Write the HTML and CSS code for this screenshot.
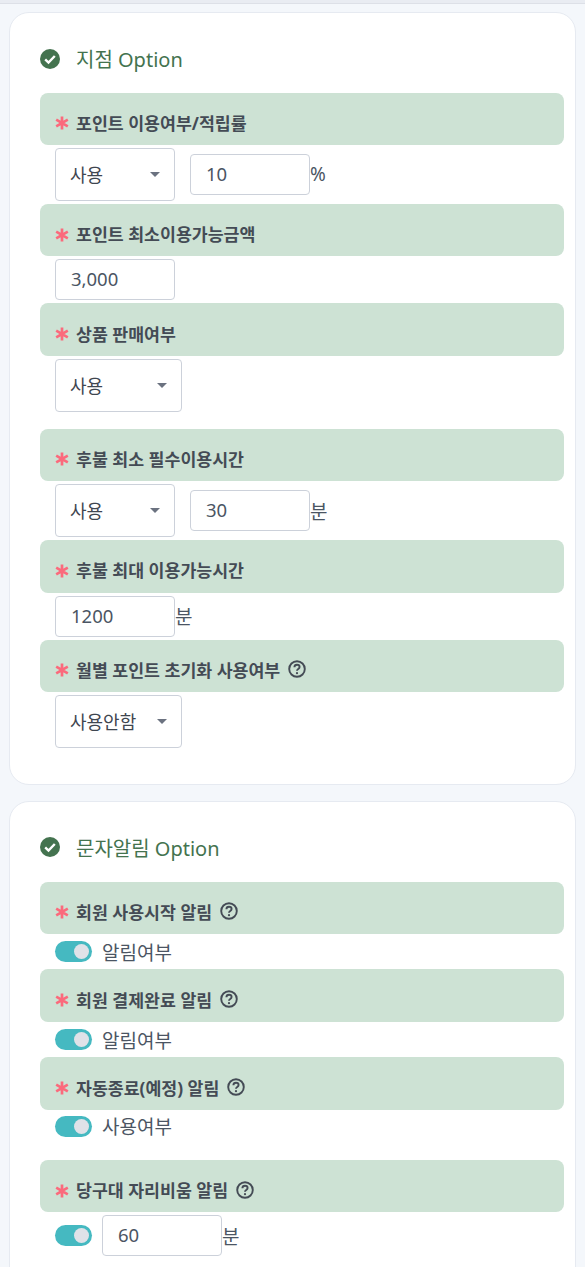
FILE: index.html
```html
<!DOCTYPE html>
<html lang="ko">
<head>
<meta charset="UTF-8" />
<meta name="viewport" content="width=device-width, initial-scale=1" />
<title>Option</title>
<link rel="stylesheet" href="styles.css">
</head>
<body>

<svg class="icon-defs" width="0" height="0">
  <symbol id="check-circle" viewBox="0 0 20 20">
    <circle cx="10" cy="10" r="10" fill="#44734f" />
    <path d="M5.2 10.4l3.3 3.2 6.3-6.6" fill="none" stroke="#fff" stroke-width="2.4" />
  </symbol>
  <symbol id="help-circle" viewBox="0 0 18 18">
    <circle cx="9" cy="9" r="7.8" fill="none" stroke="#444b55" stroke-width="1.9" />
    <path d="M6.4 7.2c0-1.6 1.2-2.5 2.6-2.5s2.6.9 2.6 2.3c0 2-2.6 1.9-2.6 3.7" fill="none" stroke="#444b55" stroke-width="1.9" />
    <circle cx="9" cy="13.2" r="1.1" fill="#444b55" />
  </symbol>
  <symbol id="asterisk" viewBox="0 0 14 14">
    <path d="M7 0.5v13M1.2 3.6l11.6 6.8M12.8 3.6l-11.6 6.8" fill="none" stroke="#fb6a7c" stroke-width="2.7" />
  </symbol>
</svg>

<div class="topbar"></div>

<!-- 지점 Option -->
<section class="card">
  <h2 class="card-title"><svg class="title-icon"><use href="#check-circle" /></svg>지점 Option</h2>

  <div class="field-head"><svg class="star"><use href="#asterisk" /></svg>포인트 이용여부/적립률</div>
  <div class="field-row">
    <div class="select-box"><select><option>사용</option></select></div>
    <input class="text-input input-after" type="text" value="10" /><span class="unit">%</span>
  </div>

  <div class="field-head"><svg class="star"><use href="#asterisk" /></svg>포인트 최소이용가능금액</div>
  <div class="field-row">
    <input class="text-input" type="text" value="3,000" />
  </div>

  <div class="field-head"><svg class="star"><use href="#asterisk" /></svg>상품 판매여부</div>
  <div class="field-row row-spaced">
    <div class="select-box select-wide"><select><option>사용</option></select></div>
  </div>

  <div class="field-head"><svg class="star"><use href="#asterisk" /></svg>후불 최소 필수이용시간</div>
  <div class="field-row">
    <div class="select-box"><select><option>사용</option></select></div>
    <input class="text-input input-after" type="text" value="30" /><span class="unit">분</span>
  </div>

  <div class="field-head"><svg class="star"><use href="#asterisk" /></svg>후불 최대 이용가능시간</div>
  <div class="field-row">
    <input class="text-input" type="text" value="1200" /><span class="unit">분</span>
  </div>

  <div class="field-head"><svg class="star"><use href="#asterisk" /></svg>월별 포인트 초기화 사용여부<svg class="help-icon"><use href="#help-circle" /></svg></div>
  <div class="field-row">
    <div class="select-box select-wide"><select><option>사용안함</option></select></div>
  </div>
</section>

<!-- 문자알림 Option -->
<section class="card">
  <h2 class="card-title"><svg class="title-icon"><use href="#check-circle" /></svg>문자알림 Option</h2>

  <div class="field-head"><svg class="star"><use href="#asterisk" /></svg>회원 사용시작 알림<svg class="help-icon"><use href="#help-circle" /></svg></div>
  <div class="toggle-row">
    <span class="toggle"></span><span class="toggle-label">알림여부</span>
  </div>

  <div class="field-head"><svg class="star"><use href="#asterisk" /></svg>회원 결제완료 알림<svg class="help-icon"><use href="#help-circle" /></svg></div>
  <div class="toggle-row">
    <span class="toggle"></span><span class="toggle-label">알림여부</span>
  </div>

  <div class="field-head"><svg class="star"><use href="#asterisk" /></svg>자동종료(예정) 알림<svg class="help-icon"><use href="#help-circle" /></svg></div>
  <div class="toggle-row toggle-spaced">
    <span class="toggle"></span><span class="toggle-label">사용여부</span>
  </div>

  <div class="field-head"><svg class="star"><use href="#asterisk" /></svg>당구대 자리비움 알림<svg class="help-icon"><use href="#help-circle" /></svg></div>
  <div class="field-row">
    <span class="toggle"></span>
    <input class="text-input toggle-input" type="text" value="60" /><span class="unit">분</span>
  </div>
</section>

</body>
</html>
```

FILE: styles.css
```css
* {
  box-sizing: border-box;
}
html, body {
  height: 1267px;
  overflow: hidden;
}
body {
  margin: 0;
  padding: 0 9.5px 0 9px;
  background: #f4f7fb;
  color: #3f4650;
  font-family: "Noto Sans", "Noto Sans CJK KR", sans-serif;
  font-size: 19px;
}
.icon-defs {
  position: absolute;
}
.topbar {
  height: 4px;
  margin: 0 -9.5px 8px -9px;
  background: #e9ecf2;
  border-bottom: 1px solid #dde0e7;
}
.card {
  padding: 28px 10.5px 33px 30px;
  margin-bottom: 16px;
  background: #fff;
  border: 1px solid #e6eaf1;
  border-radius: 20px;
}
.card-title {
  display: flex;
  align-items: center;
  height: 35px;
  margin: 0 0 16.6px;
  color: #44734f;
  font-size: 20px;
  font-weight: 400;
}
.title-icon {
  width: 20px;
  height: 20px;
  margin-right: 16px;
}
.field-head {
  display: flex;
  align-items: center;
  height: 52.4px;
  padding: 7px 0 0 15px;
  background: #cde2d4;
  border-radius: 8px;
  color: #444b55;
  font-size: 17.3px;
  font-weight: 700;
}
.star {
  flex: none;
  width: 14px;
  height: 14px;
  margin: 2px 7px 0 0;
}
.help-icon {
  flex: none;
  width: 18px;
  height: 18px;
  margin-left: 8px;
}
.field-row {
  display: flex;
  align-items: center;
  margin: 3px 0;
  padding-left: 15px;
}
.row-spaced {
  margin-bottom: 17px;
}
.select-box {
  position: relative;
  width: 120px;
  height: 53px;
}
.select-box::after {
  content: "";
  position: absolute;
  top: 24px;
  right: 15px;
  border: 5px solid transparent;
  border-top-color: #6b7280;
  border-bottom: 0;
}
.select-wide {
  width: 127px;
}
select {
  width: 100%;
  height: 100%;
  padding: 1px 14px 0;
  appearance: none;
  background: #fff;
  border: 1px solid #ccd1da;
  border-radius: 4px;
  color: #3f4650;
  font-family: inherit;
  font-size: 18px;
}
.text-input {
  width: 120px;
  height: 41px;
  padding: 0 15px 2px;
  background: #fff;
  border: 1px solid #ccd1da;
  border-radius: 4px;
  color: #4b5563;
  font-family: inherit;
  font-size: 18.5px;
}
.input-after {
  margin-left: 15px;
}
.toggle-input {
  margin-left: 10px;
}
.unit {
  color: #4b5563;
}
.toggle-row {
  display: flex;
  align-items: center;
  height: 29.5px;
  margin: 3px 0;
  padding-left: 15px;
}
.toggle-spaced {
  height: 27px;
  margin-bottom: 20.2px;
}
.toggle-label {
  margin-left: 10px;
  color: #4b5563;
}
.toggle {
  position: relative;
  flex: none;
  width: 37px;
  height: 21px;
  background: #45b9c1;
  border-radius: 11px;
}
.toggle::after {
  content: "";
  position: absolute;
  top: 3px;
  right: 3px;
  width: 15px;
  height: 15px;
  background: #dfe2e8;
  border-radius: 50%;
}
```
